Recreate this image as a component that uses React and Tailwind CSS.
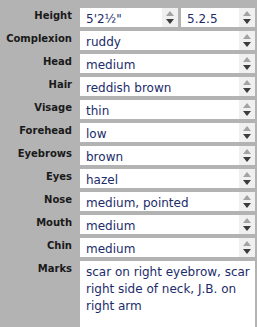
import React from 'react';

const rows = [
  ['Complexion', 'ruddy'],
  ['Head', 'medium'],
  ['Hair', 'reddish brown'],
  ['Visage', 'thin'],
  ['Forehead', 'low'],
  ['Eyebrows', 'brown'],
  ['Eyes', 'hazel'],
  ['Nose', 'medium, pointed'],
  ['Mouth', 'medium'],
  ['Chin', 'medium'],
];

const Spinner = () => (
  <div className="flex w-[16px] shrink-0 flex-col items-center justify-center gap-[3px] bg-[#f0f0f0]">
    <svg width="8" height="5" viewBox="0 0 8 5">
      <path d="M4 0 L8 5 L0 5 Z" fill="#a3a3a3" />
    </svg>
    <svg width="8" height="5" viewBox="0 0 8 5">
      <path d="M0 0 L8 0 L4 5 Z" fill="#3c3c3c" />
    </svg>
  </div>
);

const Field = ({ value, className = '' }) => (
  <div className={`flex h-[19px] bg-white ${className}`}>
    <span className="flex-1 truncate pl-[6px] pt-[3px] text-[12px] leading-[16px] text-[#1c2c6a]">
      {value}
    </span>
    <Spinner />
  </div>
);

const Label = ({ children }) => (
  <div className="pt-[1px] text-right text-[10px] font-bold leading-[14px] text-[#1a1a1a]">
    {children}
  </div>
);

export default function App() {
  return (
    <div
      className="h-[327px] w-[257px] overflow-hidden bg-[#b3b3b3] pr-[2px] pt-[8px]"
      style={{ fontFamily: '"DejaVu Sans", Verdana, sans-serif' }}
    >
      <div className="grid grid-cols-[72px_1fr] gap-x-[8px] gap-y-[4px]">
        <Label>Height</Label>
        <div className="flex gap-[3px]">
          <Field value={'5\'2½"'} className="w-[98px]" />
          <Field value="5.2.5" className="flex-1" />
        </div>
        {rows.map(([label, value]) => (
          <React.Fragment key={label}>
            <Label>{label}</Label>
            <Field value={value} />
          </React.Fragment>
        ))}
        <Label>Marks</Label>
        <div className="h-[80px] bg-white pl-[6px] pr-[4px] pt-[3px] text-[12px] leading-[17px] text-[#1c2c6a]">
          scar on right eyebrow, scar right side of neck, J.B. on right arm
        </div>
      </div>
    </div>
  );
}
